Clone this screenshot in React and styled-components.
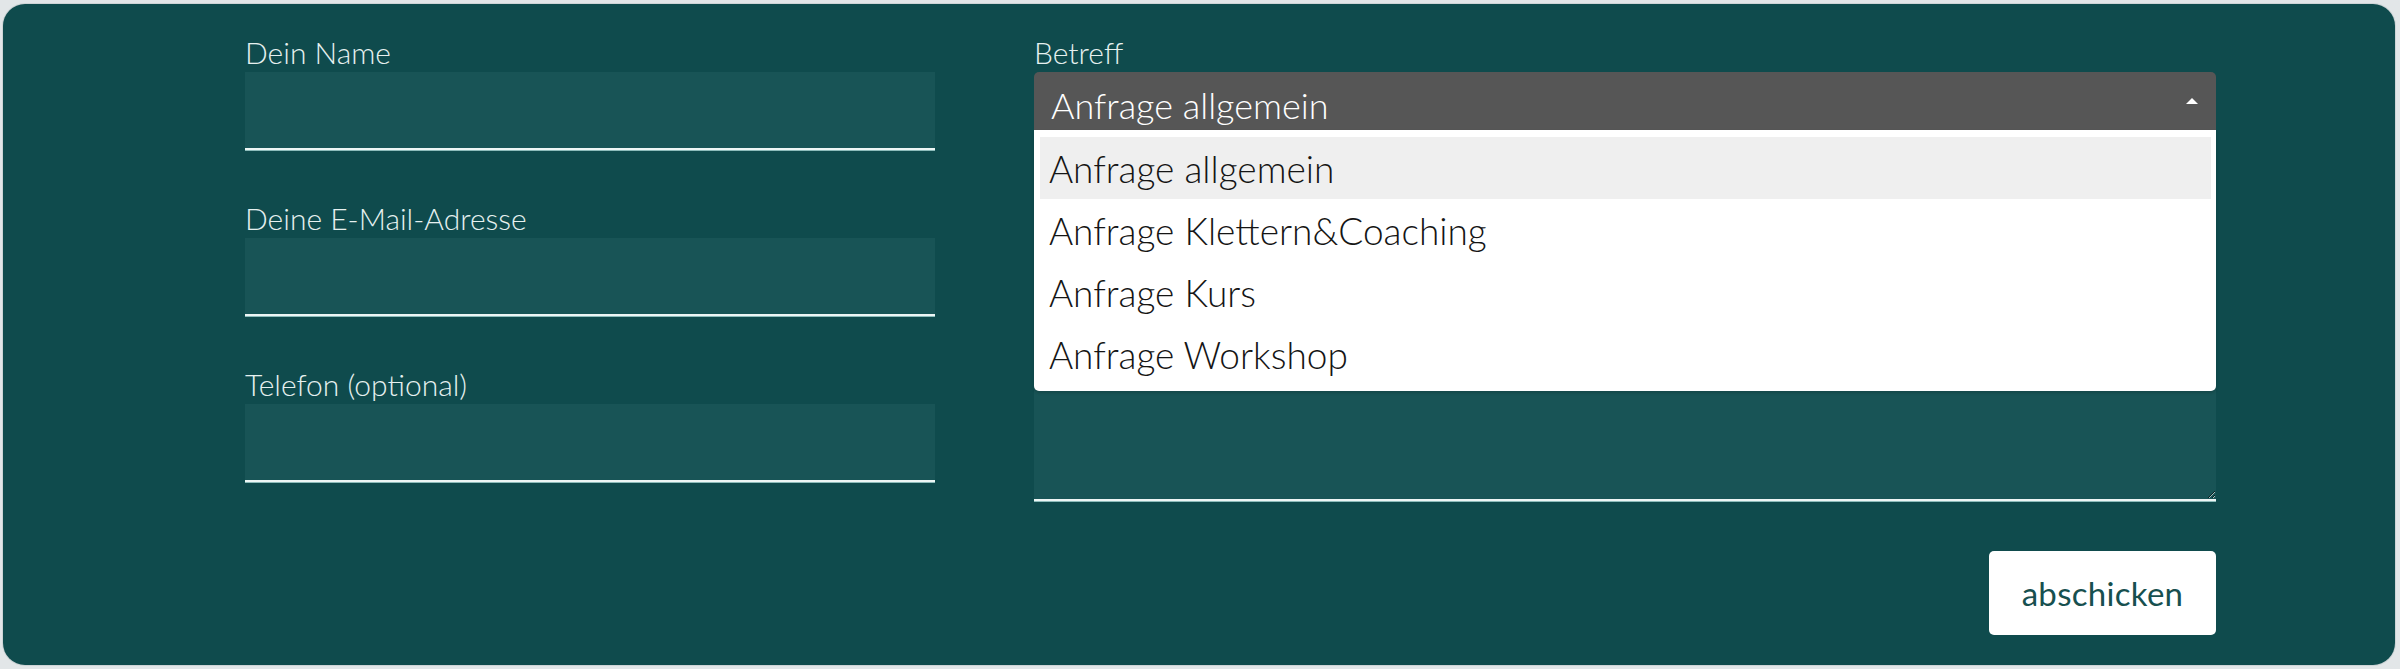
import React from "react";
import styled, { createGlobalStyle } from "styled-components";

const GlobalStyle = createGlobalStyle`
  html, body {
    margin: 0;
    background: #e2e6e8;
  }
  body {
    font-family: Lato, "Liberation Sans", sans-serif;
  }
`;

const Card = styled.div`
  box-sizing: border-box;
  margin: 4px 5px 4px 3px;
  height: 661px;
  padding: 30px 179px 30px 242px;
  background: #0f4b4d;
  border-radius: 22px;
  box-shadow: 0 0 0 1px #cdd4d6;
`;

const Form = styled.form`
  display: grid;
  grid-template-columns: 690px 1182px;
  column-gap: 99px;
  align-items: start;
`;

const Column = styled.div`
  display: flex;
  flex-direction: column;
  gap: 50px;
`;

const Field = styled.div`
  display: flex;
  flex-direction: column;
`;

const Label = styled.label`
  font-size: 30px;
  line-height: 36px;
  font-weight: 300;
  color: #e6f1f0;
  margin-bottom: 2px;
  visibility: ${(p) => (p.$covered ? "hidden" : "visible")};
`;

const TextInput = styled.input`
  box-sizing: border-box;
  width: 100%;
  height: 78px;
  background: #185456;
  border: none;
  border-bottom: 2px solid #edf6f5;
  box-shadow: 0 1px 0 #8dbcbb;
  outline: none;
  color: #fff;
  font: 300 30px Lato, "Liberation Sans", sans-serif;
  padding: 0 16px;
`;

const TextArea = styled.textarea`
  box-sizing: border-box;
  display: block;
  width: 100%;
  height: ${(p) => p.$h}px;
  background: #185456;
  border: none;
  border-bottom: 2px solid #edf6f5;
  box-shadow: 0 1px 0 #8dbcbb;
  outline: none;
  resize: vertical;
  color: #fff;
  font: 300 30px Lato, "Liberation Sans", sans-serif;
  padding: 12px 16px;
`;

const SelectWrap = styled.div`
  position: relative;
`;

const SelectHead = styled.div`
  box-sizing: border-box;
  height: 58px;
  padding: 0 18px 0 17px;
  display: flex;
  align-items: center;
  justify-content: space-between;
  background: #565656;
  border-radius: 5px 5px 0 0;
  color: #fff;
  font-size: 36px;
  font-weight: 300;
`;

const HeadText = styled.span`
  padding-top: 7px;
`;

const Arrow = styled.span`
  width: 0;
  height: 0;
  border-left: 6px solid transparent;
  border-right: 6px solid transparent;
  border-bottom: 6px solid #fff;
`;

const OptionList = styled.ul`
  position: absolute;
  top: 100%;
  left: 0;
  right: 0;
  z-index: 2;
  margin: 0;
  padding: 7px 5px 6px 6px;
  list-style: none;
  background: #fff;
  border-radius: 0 0 5px 5px;
  box-shadow: 0 2px 3px rgba(0, 0, 0, 0.15);
`;

const Option = styled.li`
  box-sizing: border-box;
  height: 62px;
  padding: 0 0 0 9px;
  display: flex;
  align-items: center;
  background: ${(p) => (p.$active ? "#efefef" : "transparent")};
  color: #151515;
  font-size: 37px;
  font-weight: 300;
`;

const ButtonRow = styled.div`
  display: flex;
  justify-content: flex-end;
`;

const SubmitButton = styled.button`
  width: 227px;
  height: 84px;
  border: none;
  border-radius: 5px;
  background: #fff;
  color: #17504f;
  font: 400 33px Lato, "Liberation Sans", sans-serif;
  letter-spacing: 0.3px;
  cursor: pointer;
`;

const options = [
  "Anfrage allgemein",
  "Anfrage Klettern&Coaching",
  "Anfrage Kurs",
  "Anfrage Workshop",
];

export default function App() {
  const selected = options[0];
  return (
    <>
      <GlobalStyle />
      <Card>
        <Form onSubmit={(e) => e.preventDefault()}>
          <Column>
            <Field>
              <Label>Dein Name</Label>
              <TextInput type="text" />
            </Field>
            <Field>
              <Label>Deine E-Mail-Adresse</Label>
              <TextInput type="email" />
            </Field>
            <Field>
              <Label>Telefon (optional)</Label>
              <TextInput type="tel" />
            </Field>
          </Column>
          <Column>
            <Field>
              <Label>Betreff</Label>
              <SelectWrap>
                <SelectHead>
                  <HeadText>{selected}</HeadText>
                  <Arrow />
                </SelectHead>
                <OptionList>
                  {options.map((o) => (
                    <Option key={o} $active={o === selected}>
                      {o}
                    </Option>
                  ))}
                </OptionList>
              </SelectWrap>
            </Field>
            <Field>
              {/* covered by the open dropdown in this state */}
              <Label $covered>Deine Nachricht</Label>
              <TextArea $h={283} />
            </Field>
            <ButtonRow>
              <SubmitButton type="submit">abschicken</SubmitButton>
            </ButtonRow>
          </Column>
        </Form>
      </Card>
    </>
  );
}
